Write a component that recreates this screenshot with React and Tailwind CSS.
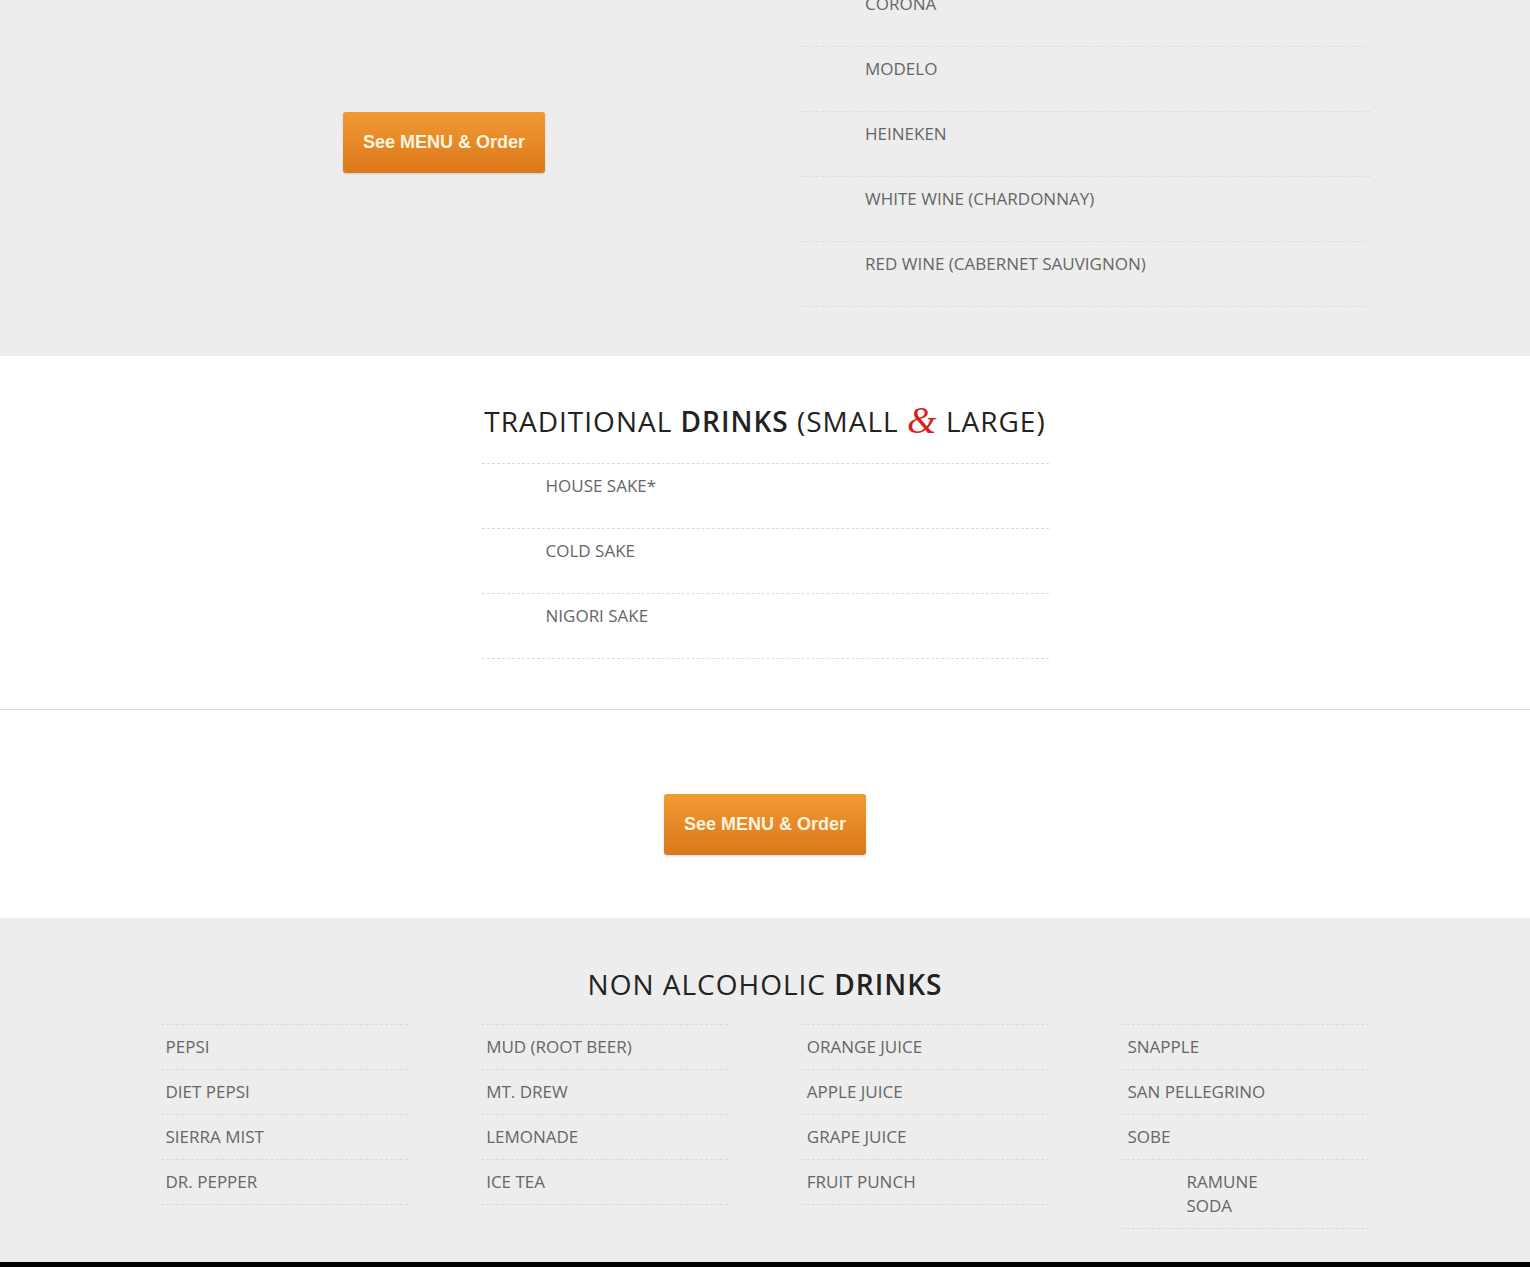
import React from "react";

const font = { fontFamily: '"Open Sans", "Noto Sans", sans-serif' };

function OrderButton() {
  return (
    <a
      href="#"
      className="inline-flex items-center justify-center w-[202px] h-[61px] rounded-[3px] bg-gradient-to-b from-[#f19a33] to-[#db781a] text-[#fff4df] font-bold text-[18px] shadow-[0_1px_2px_rgba(0,0,0,0.15)]"
      style={{ fontFamily: '"Liberation Sans", Arial, sans-serif' }}
    >
      See MENU &amp; Order
    </a>
  );
}

function BigRow({ children }) {
  return (
    <li className="pl-16 pt-[10px] pb-[30px] leading-6 text-[17px] text-[#666] uppercase border-b border-dashed border-[#dcdcdc]">
      {children}
    </li>
  );
}

function SmallRow({ children, indent }) {
  return (
    <li
      className={
        "pt-[10px] pb-[10px] leading-6 text-[17px] text-[#666] uppercase border-b border-dashed border-[#d8d8d8] " +
        (indent ? "pl-16" : "pl-[5px]")
      }
    >
      {children}
    </li>
  );
}

export default function App() {
  const cols = [
    ["Pepsi", "Diet Pepsi", "Sierra Mist", "Dr. Pepper"],
    ["Mud (Root Beer)", "Mt. Drew", "Lemonade", "Ice Tea"],
    ["Orange Juice", "Apple Juice", "Grape Juice", "Fruit Punch"],
    ["Snapple", "San Pellegrino", "Sobe"],
  ];
  return (
    <div className="w-full bg-white" style={font}>
      {/* Top gray section */}
      <section className="bg-[#ededed] h-[356px] overflow-hidden">
        <div className="w-[1210px] mx-auto grid grid-cols-[568px_569px] gap-x-[73px]">
          <div className="flex justify-center pt-[112px]">
            <OrderButton />
          </div>
          <ul className="-mt-[18px]">
            <BigRow>Corona</BigRow>
            <BigRow>Modelo</BigRow>
            <BigRow>Heineken</BigRow>
            <BigRow>White Wine (Chardonnay)</BigRow>
            <BigRow>Red Wine (Cabernet Sauvignon)</BigRow>
          </ul>
        </div>
      </section>

      {/* Traditional drinks */}
      <section className="bg-white pt-[45px] pb-[50px] border-b border-[#dedede]">
        <h2 className="text-center text-[28px] leading-[40px] tracking-[1px] text-[#222] uppercase font-normal">
          Traditional <span className="font-semibold">Drinks</span> (Small{" "}
          <span
            className="text-[#d81f1f] text-[38px] leading-none align-[-1px]"
            style={{ fontFamily: '"Liberation Serif", "Times New Roman", serif', fontStyle: "italic" }}
          >
            &amp;
          </span>{" "}
          Large)
        </h2>
        <ul className="w-[567px] mx-auto mt-[22px] border-t border-dashed border-[#dcdcdc]">
          <BigRow>House Sake*</BigRow>
          <BigRow>Cold Sake</BigRow>
          <BigRow>Nigori Sake</BigRow>
        </ul>
      </section>

      {/* Button section */}
      <section className="bg-white h-[208px] flex justify-center pt-[84px]">
        <OrderButton />
      </section>

      {/* Non alcoholic */}
      <section className="bg-[#ededed] pt-[44px] h-[344px]">
        <h2 className="text-center text-[28px] leading-[44px] tracking-[1px] text-[#222] uppercase font-normal">
          Non Alcoholic <span className="font-semibold">Drinks</span>
        </h2>
        <div className="w-[1209px] mx-auto mt-[18px] flex justify-between">
          {cols.map((c, i) => (
            <ul key={i} className="w-[247px] border-t border-dashed border-[#d8d8d8]">
              {c.map((t) => (
                <SmallRow key={t}>{t}</SmallRow>
              ))}
              {i === 3 && (
                <SmallRow indent>
                  <span className="block w-[90px]">Ramune Soda</span>
                </SmallRow>
              )}
            </ul>
          ))}
        </div>
      </section>
      <div className="h-[5px] bg-black" />
    </div>
  );
}
